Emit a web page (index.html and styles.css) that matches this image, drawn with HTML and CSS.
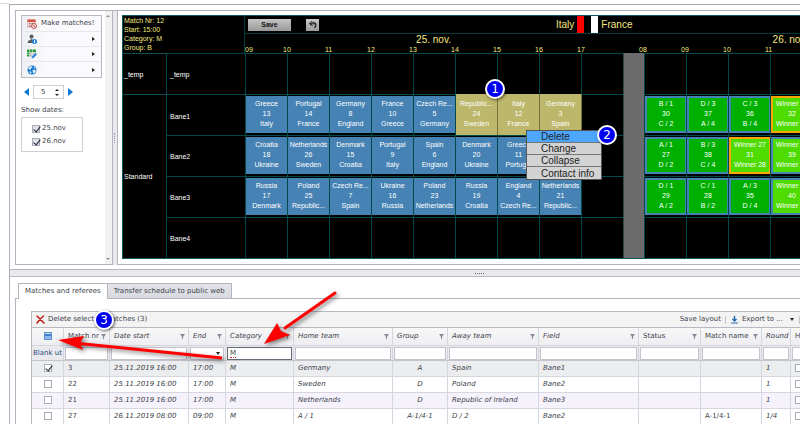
FILE: index.html
```html
<!DOCTYPE html>
<html lang="en">
<head>
<meta charset="utf-8">
<title>Match schedule</title>
<link rel="stylesheet" href="styles.css">
</head>
<body>
<div class="page">
<div class="frame">
  <div class="split">
    <aside class="side">
      <div class="side-body">
        <nav class="menu">
          <button class="menu-item" type="button">
            <svg class="ico" viewBox="0 0 20 20"><rect x="1" y="2" width="16" height="14" fill="#f3e3e3" stroke="#b98a8a"/><rect x="1" y="1" width="16" height="5" fill="#d9503f"/><path d="M4 9h3M9 9h3M4 12h3M4 15h3" stroke="#b06a6a" stroke-width="2"/><circle cx="14" cy="14" r="5" fill="#f5dada" stroke="#c25555" stroke-width="2"/><path d="M12 12l4 4" stroke="#c25555" stroke-width="2"/></svg>
            <span>Make matches!</span></button>
          <button class="menu-item" type="button" aria-label="Referees">
            <svg class="ico" viewBox="0 0 20 20"><circle cx="9" cy="5" r="4" fill="#555b66"/><path d="M7 9h4v3h-4z" fill="#777"/><path d="M1 18c0-5 4-6 8-6s6 2 6 6z" fill="#555b66"/><circle cx="15" cy="15" r="5" fill="#1c7fd6"/><path d="M15 12v6" stroke="#fff" stroke-width="2"/></svg>
            <span class="more"></span></button>
          <button class="menu-item" type="button" aria-label="Table">
            <svg class="ico" viewBox="0 0 20 20"><path d="M0 1h5v5H0zM6 1h5v5H6zM12 1h6v5h-6z" fill="#2c9a38"/><path d="M0 7h5v4H0zM0 12h5v3H0z" fill="#2c9a38"/><path d="M6 7h5v4H6zM12 7h6v4h-6zM6 12h5v3H6z" fill="#b9c3bd"/><path d="M9 19l1-4 7-7 3 3-7 7z" fill="#2e86d8"/></svg>
            <span class="more"></span></button>
          <button class="menu-item" type="button" aria-label="Web">
            <svg class="ico" viewBox="0 0 20 20"><circle cx="10" cy="10" r="9" fill="#1577cf"/><path d="M3 5l5-3 3 2-3 3-1 3-4-2zM11 10l5-1 2 3-4 5-2-1zM13 3l4 3-3 1zM5 12l4 2-1 4-3-3z" fill="#dcecf8"/></svg>
            <span class="more"></span></button>
        </nav>
        <div class="stepper">
          <button class="prev" type="button" aria-label="Previous"></button>
          <span class="count"><input type="text" value="5" aria-label="Number of days"><span class="ticks"><button class="up" type="button" aria-label="More"></button><button class="down" type="button" aria-label="Fewer"></button></span></span>
          <button class="next" type="button" aria-label="Next"></button>
        </div>
        <div class="dates-title">Show dates:</div>
        <div class="dates">
          <label><input class="box tinted" type="checkbox" checked>25.nov</label>
          <label><input class="box tinted" type="checkbox" checked>26.nov</label>
        </div>
      </div>
      <div class="scroll"><span class="s-up"></span><span class="s-down"></span></div>
    </aside>
    <div class="v-split"><span class="grip-v"></span></div>
    <main class="board-pane">
      <div class="board">
        <div class="board-head">
          <div class="info">Match Nr: 12<br>Start: 15:00<br>Category: M<br>Group: B</div>
          <div class="head-right">
            <div class="tools">
              <button class="save" type="button">Save</button>
              <button class="undo" type="button" aria-label="Undo"><svg viewBox="0 0 24 24"><path d="M10 3L4 9l7 5M5 9h8c8 0 8 6 2 10M11 6c8-1 11 5 5 11" fill="none" stroke="#222" stroke-width="2.5"/></svg></button>
              <div class="teams"><span>Italy</span><i class="kit red"></i><i class="kit white"></i><span>France</span></div>
            </div>
            <div class="times">
              <div class="day d1"><div class="date">25. nov.</div><div class="hours"><span>09</span><span>10</span><span>11</span><span>12</span><span>13</span><span>14</span><span>15</span><span>16</span><span>17</span></div></div>
              <div class="day d2"><div class="date">26. nov.</div><div class="hours"><span>08</span><span>09</span><span>10</span><span>11</span></div></div>
            </div>
          </div>
        </div>
        <div class="group">
          <div class="group-name">_temp</div>
          <div class="lanes">
            <div class="lane"><b>_temp</b><i></i><i></i><i></i><i></i><i></i><i></i><i></i><i></i><i></i><u></u><i></i><i></i><i></i><i></i></div>
          </div>
        </div>
        <div class="group">
          <div class="group-name">Standard</div>
          <div class="lanes">
            <div class="lane"><b>Bane1</b>
              <i><span class="m">Greece<br>13<br>Italy</span></i><i><span class="m">Portugal<br>14<br>France</span></i><i><span class="m">Germany<br>8<br>England</span></i><i><span class="m">France<br>10<br>Greece</span></i><i><span class="m">Czech Re...<br>5<br>Germany</span></i><i><span class="m sel">Republic...<br>24<br>Sweden</span></i><i><span class="m sel">Italy<br>12<br>France</span></i><i><span class="m sel">Germany<br>3<br>Spain</span></i><i></i><u></u><i><span class="m po">B / 1<br>30<br>C / 2</span></i><i><span class="m po">D / 3<br>37<br>A / 4</span></i><i><span class="m po">C / 3<br>36<br>B / 4</span></i><i><span class="m po win hot">Winner 35<br>32<br>Winner 36</span></i></div>
            <div class="lane"><b>Bane2</b>
              <i><span class="m">Croatia<br>18<br>Ukraine</span></i><i><span class="m">Netherlands<br>26<br>Sweden</span></i><i><span class="m">Denmark<br>15<br>Croatia</span></i><i><span class="m">Portugal<br>9<br>Italy</span></i><i><span class="m">Spain<br>6<br>England</span></i><i><span class="m">Denmark<br>20<br>Ukraine</span></i><i><span class="m">Greece<br>11<br>Portugal</span></i><i></i><i></i><u></u><i><span class="m po">A / 1<br>27<br>D / 2</span></i><i><span class="m po">B / 3<br>38<br>C / 4</span></i><i><span class="m po win hot">Winner 27<br>31<br>Winner 28</span></i><i><span class="m po win">Winner 35<br>39<br>Winner 36</span></i></div>
            <div class="lane"><b>Bane3</b>
              <i><span class="m">Russia<br>17<br>Denmark</span></i><i><span class="m">Poland<br>25<br>Republic...</span></i><i><span class="m">Czech Re...<br>7<br>Spain</span></i><i><span class="m">Ukraine<br>16<br>Russia</span></i><i><span class="m">Poland<br>23<br>Netherlands</span></i><i><span class="m">Russia<br>19<br>Croatia</span></i><i><span class="m">England<br>4<br>Czech Re...</span></i><i><span class="m">Netherlands<br>21<br>Republic...</span></i><i></i><u></u><i><span class="m po">D / 1<br>29<br>A / 2</span></i><i><span class="m po">C / 1<br>28<br>B / 2</span></i><i><span class="m po">A / 3<br>35<br>D / 4</span></i><i><span class="m po win">Winner 37<br>40<br>Winner 38</span></i></div>
            <div class="lane"><b>Bane4</b><i></i><i></i><i></i><i></i><i></i><i></i><i></i><i></i><i></i><u></u><i></i><i></i><i></i><i></i></div>
          </div>
        </div>
        <div class="context">
          <button class="on" type="button">Delete</button><button type="button">Change</button><button type="button">Collapse</button><button type="button">Contact info</button>
        </div>
      </div>
    </main>
  </div>
  <div class="h-split"><span class="grip-h"></span></div>
  <div class="tabs">
    <button class="tab active" type="button">Matches and referees</button><button class="tab" type="button">Transfer schedule to public web</button>
  </div>
  <section class="panel">
    <div class="grid">
      <div class="grid-bar">
        <button class="tool" type="button"><svg class="cross" viewBox="0 0 18 18"><path d="M2 2l14 14M15 2C9 7 5 11 2 16" fill="none" stroke="#c0190f" stroke-width="3" stroke-linecap="round"/></svg>Delete selected matches (3)</button>
        <div class="bar-right">
          <button class="tool" type="button">Save layout</button><span class="sep"></span>
          <button class="tool export" type="button"><svg class="down-ico" viewBox="0 0 14 16"><path d="M7 0v9M3 6l4 4 4-4" fill="none" stroke="#2c6cab" stroke-width="3"/><path d="M0 14h14" stroke="#2c6cab" stroke-width="2"/></svg>Export to ...<span class="caret"></span></button><span class="sep"></span>
        </div>
      </div>
      <table>
        <colgroup><col class="c32"><col class="c46"><col class="c79"><col class="c37"><col class="c68"><col class="c99"><col class="c55"><col class="c91"><col class="c100"><col class="c62"><col class="c61"><col class="c29"><col class="c60"></colgroup>
        <thead>
          <tr>
            <th class="ck"><input class="box some" type="checkbox" aria-label="Select all"></th>
            <th><span class="h">Match nr<span class="f"></span></span></th>
            <th class="it"><span class="h">Date start<span class="f"></span></span></th>
            <th class="it"><span class="h">End<span class="f"></span></span></th>
            <th class="it"><span class="h">Category<span class="f"></span></span></th>
            <th class="it"><span class="h">Home team<span class="f"></span></span></th>
            <th class="it"><span class="h">Group<span class="f"></span></span></th>
            <th class="it"><span class="h">Away team<span class="f"></span></span></th>
            <th class="it"><span class="h">Field<span class="f"></span></span></th>
            <th><span class="h">Status<span class="f"></span></span></th>
            <th><span class="h">Match name<span class="f"></span></span></th>
            <th class="it"><span class="h">Round</span></th>
            <th><span class="h">H</span></th>
          </tr>
          <tr class="filters">
            <td class="ck"><a href="#">Blank ut</a></td>
            <td><input type="text" aria-label="Filter match nr"></td>
            <td><input type="text" aria-label="Filter date start"></td>
            <td><span class="pick"><select aria-label="Filter end"><option></option></select></span></td>
            <td><span class="typed"><input class="focus" type="text" value="M" aria-label="Filter category"></span></td>
            <td><input type="text" aria-label="Filter home team"></td>
            <td><input type="text" aria-label="Filter group"></td>
            <td><input type="text" aria-label="Filter away team"></td>
            <td><input type="text" aria-label="Filter field"></td>
            <td><input type="text" aria-label="Filter status"></td>
            <td><input type="text" aria-label="Filter match name"></td>
            <td><input type="text" aria-label="Filter round"></td>
            <td><input type="text" aria-label="Filter hidden"></td>
          </tr>
        </thead>
        <tbody>
          <tr class="picked"><td class="ck"><input class="box" type="checkbox" checked aria-label="Select match 3"></td><td>3</td><td class="it">25.11.2019 16:00</td><td class="it">17:00</td><td class="it">M</td><td class="it">Germany</td><td class="it mid">A</td><td class="it">Spain</td><td class="it">Bane1</td><td></td><td></td><td class="it">1</td><td><input class="box" type="checkbox" aria-label="Hide match 3"></td></tr>
          <tr><td class="ck"><input class="box" type="checkbox" aria-label="Select match 22"></td><td>22</td><td class="it">25.11.2019 16:00</td><td class="it">17:00</td><td class="it">M</td><td class="it">Sweden</td><td class="it mid">D</td><td class="it">Poland</td><td class="it">Bane2</td><td></td><td></td><td class="it">1</td><td><input class="box" type="checkbox" aria-label="Hide match 22"></td></tr>
          <tr class="alt"><td class="ck"><input class="box" type="checkbox" aria-label="Select match 21"></td><td>21</td><td class="it">25.11.2019 16:00</td><td class="it">17:00</td><td class="it">M</td><td class="it">Netherlands</td><td class="it mid">D</td><td class="it">Republic of Ireland</td><td class="it">Bane3</td><td></td><td></td><td class="it">1</td><td><input class="box" type="checkbox" aria-label="Hide match 21"></td></tr>
          <tr><td class="ck"><input class="box" type="checkbox" aria-label="Select match 27"></td><td>27</td><td class="it">26.11.2019 08:00</td><td class="it">09:00</td><td class="it">M</td><td class="it">A / 1</td><td class="it mid">A-1/4-1</td><td class="it">D / 2</td><td class="it">Bane2</td><td></td><td>A-1/4-1</td><td class="it">1/4</td><td><input class="box" type="checkbox" aria-label="Hide match 27"></td></tr>
        </tbody>
      </table>
    </div>
  </section>
</div>
<svg class="arrow a1" viewBox="0 0 90 70"><path d="M75 13L25 48" stroke="#f00" stroke-width="3" stroke-linecap="round"/><path d="M4 64L17 43L21 51L30 55z" fill="#f00"/></svg>
<svg class="arrow a2" viewBox="0 0 180 40"><path d="M24 13L172 28" stroke="#f00" stroke-width="3"/><path d="M8 10L34 6L30 13L33 20z" fill="#f00"/></svg>
<span class="badge n1">1</span><span class="badge n2">2</span><span class="badge n3">3</span>
</div>
</body>
</html>
```
FILE: styles.css
```css
* { box-sizing: border-box; }
body { margin: 0; background: #fff; color: #3c3f4a; font: 7px/9px "DejaVu Sans", sans-serif; }
button, input, select { font: inherit; color: inherit; margin: 0; padding: 0; border: 0; background: none; border-radius: 0; }
.page { position: relative; overflow: hidden; padding: 4px 0 0 9px; }
.page::before { content: ""; position: absolute; left: 0; top: 3px; width: 9px; height: 1px; background: #dcdce0; }
.frame { border-left: 1px solid #b0b0ba; border-top: 1px solid #a8a8b4; }

/* Upper split */
.split { display: flex; margin: 5px 0 0 5px; }
.side { display: flex; width: 97px; flex: none; border: 1px solid #b4b4be; border-right: 0; }
.side-body { flex: 1; padding: 4px 3px 0 5px; }
.menu { border: 1px solid #b9b9c3; background: linear-gradient(90deg, #eff0f3, #fafafc 30%); }
.menu-item { display: flex; align-items: center; width: 100%; height: 15px; padding: 0 6px 0 5px; border-bottom: 1px solid #e6e7eb; white-space: nowrap; }
.menu-item:first-child { height: 16px; }
.menu-item:last-child { border-bottom: 0; }
.ico { width: 10px; height: 10px; margin-right: 4px; flex: none; }
.more { margin-left: auto; border: 3px solid transparent; border-left-color: #222; border-right: 0; border-width: 2px 0 2px 3px; }
.stepper { display: flex; align-items: center; gap: 4px; margin: 7px 0 0 3px; }
.prev, .next { border: solid transparent; }
.prev { border-width: 4px 5px 4px 0; border-right-color: #0f78d0; }
.next { border-width: 4px 0 4px 5px; border-left-color: #0f78d0; }
.count { display: flex; align-items: center; width: 31px; height: 14px; border: 1px solid #cfcfd6; padding: 0 4px 0 7px; }
.count input { width: 100%; min-width: 0; }
.ticks { display: grid; gap: 3px; }
.up, .down { border: solid transparent; display: block; }
.up { border-width: 0 2px 2px; border-bottom-color: #222; }
.down { border-width: 2px 2px 0; border-top-color: #222; }
.dates-title { margin-top: 7px; }
.dates { width: 62px; margin-top: 2px; padding: 4px 0 3px 10px; border: 1px solid #cfcfd6; }
.dates label { display: flex; align-items: center; gap: 2px; height: 13px; }
.scroll { width: 10px; background: #f1f1f2; display: flex; flex-direction: column; align-items: center; justify-content: space-between; padding: 4px 0; }
.s-up, .s-down { border: solid transparent; }
.s-up { border-width: 0 2px 2px; border-bottom-color: #90909a; }
.s-down { border-width: 2px 2px 0; border-top-color: #90909a; }
.v-split { width: 6px; flex: none; background: #e8e8ee; border: solid #b4b4be; border-width: 1px 1px 0; display: flex; align-items: center; justify-content: center; }
.grip-v { width: 2px; height: 10px; border: 0 dotted #9a9aa6; border-left-width: 1px; }

.box { appearance: none; width: 8px; height: 8px; border: 1px solid #a9acb6; background: #fff; display: inline-block; position: relative; vertical-align: middle; flex: none; }
.box.tinted { background: #dfe2e8; }
.box:checked::after { content: ""; position: absolute; left: 2px; top: -1px; width: 3px; height: 6px; border: solid #23262e; border-width: 0 1px 1px 0; transform: rotate(38deg); }
.box.some { border-color: #5d8fca; background: linear-gradient(#cfe0f3 1px, #3f7fcb 1px 3px, #8db7e6 3px); }

/* Schedule board */
.board-pane { flex: 1; min-width: 0; padding: 4px 0 5px 4px; border: solid #b4b4be; border-width: 1px 0; }
.board { position: relative; overflow: hidden; background: #000; color: #fff; border: solid #0c5a5a; border-width: 1px 0 1px 1px; font-family: "Liberation Sans", Arial, sans-serif; }
.board-head { display: flex; height: 37px; color: #f5e97f; }
.info { width: 121px; flex: none; padding-left: 1px; }
.head-right { width: 693px; flex: none; border-left: 1px solid #003c3c; }
.tools { display: flex; align-items: center; height: 18px; padding-left: 3px; border-bottom: 1px solid #003c3c; font-size: 10px; }
.save { width: 43px; height: 12px; background: linear-gradient(#c4c4c4, #9a9a9a); color: #111; font-size: 7px; font-weight: bold; }
.undo { width: 13px; height: 12px; margin-left: 15px; background: linear-gradient(#c8c8c8, #9c9c9c); }
.undo svg { width: 10px; height: 10px; display: block; margin: 1px auto; }
.teams { display: flex; align-items: center; height: 100%; margin-left: 237px; gap: 3px; }
.kit { width: 7px; height: 100%; }
.kit.red { background: #f00; }
.kit.white { background: #fff; margin-left: 4px; }
.times { display: flex; }
.day { padding-top: 1px; }
.d1 { width: 398px; padding-right: 21px; flex: none; }
.d2 { width: 294px; flex: none; }
.date { font-size: 10px; line-height: 10px; text-align: center; }
.hours { display: flex; line-height: 9px; }
.hours span { width: 42px; flex: none; margin-left: -4px; margin-right: 4px; }
.d1 .hours span:first-child { margin-left: 0; margin-right: 0; }
.group { display: flex; }
.group-name { width: 43px; flex: none; padding-left: 1px; border: solid #0a5050; border-width: 1px 0 0; display: flex; align-items: center; }
.lane { display: grid; grid-template-columns: 79px repeat(9, 42px) 21px repeat(4, 42px); height: 41px; }
.lane > b { font-weight: normal; padding-left: 3px; border: solid #004848; border-width: 1px 0 0 1px; display: flex; align-items: center; }
.lane > i { font-style: normal; border: solid #004a4a; border-width: 1px 0 0 1px; padding: 1px 0 2px; }
.lane > u { background: #6b6b6b; border-left: 1px solid #2c4a4a; }
.m { display: block; height: 37px; margin-right: -1px; padding-top: 3px; background: #4682b4; border: solid #2c5c86; border-width: 0 1px 0 0; line-height: 10px; text-align: center; white-space: nowrap; }
.m.sel { height: 41px; margin-top: -2px; padding-top: 5px; background: #bdb76b; border-color: #77733c; position: relative; }
.m.po { padding-top: 1px; background: #00b000; border: 2px solid #4682b4; overflow: hidden; }
.m.win { background: #4ddb00; }
.m.hot { border-color: #ffa500; }
.context { position: absolute; left: 403px; top: 114px; width: 76px; border: 1px solid #555; background: #d3d3d3; display: grid; }
.context button { height: 12px; padding-left: 14px; text-align: left; font-size: 10px; line-height: 11px; color: #222; border-bottom: 1px solid #777; }
.context button:last-child { border-bottom: 0; }
.context .on { background: #4da6ff; }

/* Lower part */
.h-split { height: 8px; margin-top: 4px; border: solid #b8b8c2; border-width: 1px 0; background: #e9e9ee; display: flex; align-items: center; justify-content: center; padding-left: 148px; }
.grip-h { width: 9px; border-top: 1px dotted #666; }
.tabs { display: flex; margin: 6px 0 0 8px; }
.tab { height: 15px; padding: 1px 6px; border: 1px solid #b4b4be; border-bottom: 0; background: linear-gradient(#e3e4e9, #d9dae0); white-space: nowrap; }
.tab.active { background: #fff; margin-bottom: -1px; height: 16px; position: relative; }
.tab + .tab { border-left: 0; }
.panel { margin-left: 5px; border: solid #b4b4be; border-width: 1px 0 0 1px; padding: 12px 0 0 15px; }
.grid { border: solid #b8b8c2; border-width: 1px 0 0 1px; overflow: hidden; }
.grid-bar { display: flex; align-items: center; height: 16px; padding-left: 4px; background: #f3f3f4; border-bottom: 1px solid #b8b8c2; }
.tool { display: flex; align-items: center; white-space: nowrap; }
.cross { width: 9px; height: 9px; margin-right: 3px; }
.bar-right { display: flex; align-items: center; margin-left: auto; }
.sep { width: 1px; height: 8px; margin-left: 4px; background: #c4c4cc; }
.export { margin-left: 5px; }
.down-ico { width: 7px; height: 8px; margin-right: 4px; }
.caret { margin: 0 1px 0 7px; border: solid transparent; border-width: 3px 2px 0; border-top-color: #222; }
table { table-layout: fixed; width: 819px; border-collapse: separate; border-spacing: 0; }
.c32 { width: 32px; } .c46 { width: 46px; } .c79 { width: 79px; } .c37 { width: 37px; }
.c68 { width: 68px; } .c99 { width: 99px; } .c55 { width: 55px; } .c91 { width: 91px; }
.c100 { width: 100px; } .c62 { width: 62px; } .c61 { width: 61px; } .c29 { width: 29px; } .c60 { width: 60px; }
th, td { height: 16px; padding: 0 4px; border: solid #d6d6df; border-width: 0 1px 1px 0; text-align: left; vertical-align: middle; font-weight: normal; white-space: nowrap; line-height: 9px; }
th { height: 18px; padding-right: 3px; background: linear-gradient(#f8f8f9, #eeeef1); }
.it { font-style: italic; }
.mid { text-align: center; }
td.ck, th.ck { text-align: center; padding: 0; }
.h { display: flex; align-items: center; }
.f { margin-left: auto; width: 5px; height: 5px; background: #898d99; clip-path: polygon(0 0, 100% 0, 60% 60%, 60% 100%, 40% 100%, 40% 60%); }
.filters td { height: 15px; padding: 0 1px; background: #e9e9ee; border-bottom-color: #c4c4ce; }
.filters a { color: #2e4f7d; text-decoration: none; }
.filters input, .filters select { display: block; width: 100%; height: 13px; background: #fff; border: 1px solid #c3c3cd; padding: 0 2px; }
.filters select { appearance: none; }
.filters .focus { border-color: #666a76; }
.pick, .typed { display: block; position: relative; }
.pick::after { content: ""; position: absolute; right: 4px; top: 5px; border: solid transparent; border-width: 3px 2px 0; border-top-color: #222; }
.typed::after { content: ""; position: absolute; left: 3px; bottom: 2px; width: 6px; border-bottom: 1px dotted #e22; }
.picked td { background: #ecedef; }
.alt td { background: #f5f2fc; }

/* Annotations */
.arrow { position: absolute; fill: none; filter: drop-shadow(2px 2px 2px rgba(0, 0, 0, .5)); pointer-events: none; }
.a1 { left: 260px; top: 280px; width: 90px; height: 70px; }
.a2 { left: 50px; top: 330px; width: 180px; height: 40px; }
.badge { position: absolute; width: 20px; height: 20px; border: 2px solid #fff; border-radius: 50%; background: #0000f0; color: #fff; font-size: 12px; line-height: 16px; text-align: center; box-shadow: 1px 1px 3px rgba(0, 0, 0, .6); }
.n1 { left: 485px; top: 79px; }
.n2 { left: 597px; top: 125px; }
.n3 { left: 94px; top: 310px; }
```
